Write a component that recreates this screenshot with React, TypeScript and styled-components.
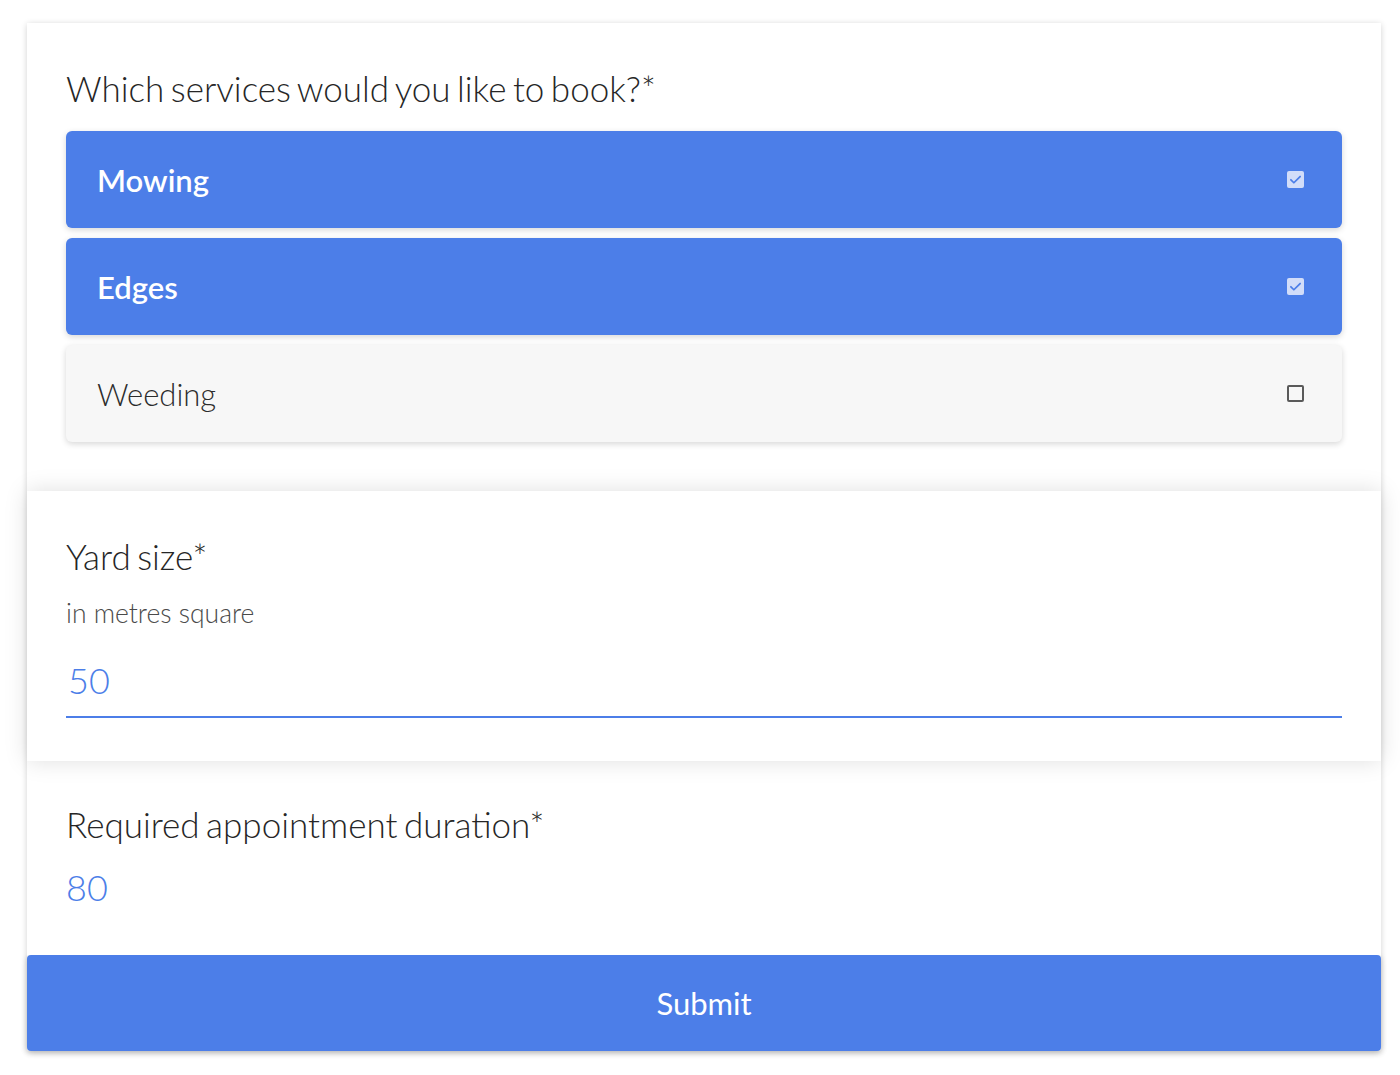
import styled, { createGlobalStyle } from "styled-components";

const GlobalStyle = createGlobalStyle`
  html, body {
    margin: 0;
    padding: 0;
    background: #ffffff;
    font-family: Lato, "Open Sans", sans-serif;
  }
`;

const BLUE = "#4c7ee8";

const Page = styled.div`
  padding: 23px 19px 24px 27px;
`;

const Card = styled.form`
  display: flex;
  flex-direction: column;
  width: 1354px;
  background: #ffffff;
  box-shadow: 0 1px 6px rgba(0, 0, 0, 0.18);
  border-radius: 2px;
`;

const Section = styled.section<{ $raised?: boolean; $top: number; $bottom: number }>`
  position: relative;
  z-index: ${(p) => (p.$raised ? 1 : 0)};
  background: #ffffff;
  padding: ${(p) => p.$top}px 39px ${(p) => p.$bottom}px;
  box-shadow: ${(p) => (p.$raised ? "0 0 22px rgba(0, 0, 0, 0.13)" : "none")};
`;

const Question = styled.h2`
  margin: 0;
  font-size: 35px;
  font-weight: 300;
  line-height: normal;
  word-spacing: -3px;
  color: #262626;
`;

const Hint = styled.p`
  margin: 20px 0 0;
  font-size: 26.5px;
  font-weight: 300;
  line-height: normal;
  color: #4a4a4a;
`;

const Options = styled.div`
  display: flex;
  flex-direction: column;
  gap: 10px;
  margin-top: 22px;
`;

const Option = styled.label<{ $checked: boolean }>`
  display: flex;
  align-items: center;
  justify-content: space-between;
  height: 97px;
  padding: 0 38px 0 31px;
  border-radius: 6px;
  background: ${(p) => (p.$checked ? BLUE : "#f7f7f7")};
  color: ${(p) => (p.$checked ? "#ffffff" : "#2c2c2c")};
  font-size: 31px;
  font-weight: ${(p) => (p.$checked ? 600 : 300)};
  box-shadow: 0 2px 6px rgba(0, 0, 0, 0.16);
  box-sizing: border-box;
`;

const Box = styled.span<{ $checked: boolean }>`
  display: flex;
  align-items: center;
  justify-content: center;
  width: 17px;
  height: 17px;
  box-sizing: border-box;
  border-radius: 2px;
  background: ${(p) => (p.$checked ? "#d2ddf9" : "transparent")};
  border: ${(p) => (p.$checked ? "none" : "2px solid #5a5a5a")};
`;

const ValueInput = styled.div`
  margin-top: 29px;
  padding: 0 0 14px 2px;
  border-bottom: 2px solid ${BLUE};
  font-size: 36px;
  font-weight: 300;
  line-height: normal;
  color: ${BLUE};
`;

const Value = styled.div`
  margin-top: 20px;
  font-size: 36px;
  font-weight: 300;
  line-height: normal;
  color: ${BLUE};
`;

const Submit = styled.button`
  height: 96px;
  border: none;
  border-radius: 4px;
  background: ${BLUE};
  color: #ffffff;
  font-family: Lato, "Open Sans", sans-serif;
  font-size: 31px;
  font-weight: 400;
  box-shadow: 0 2px 6px rgba(0, 0, 0, 0.2);
  cursor: pointer;
`;

const services = [
  { name: "Mowing", checked: true },
  { name: "Edges", checked: true },
  { name: "Weeding", checked: false },
];

const Check = () => (
  <svg width="13" height="13" viewBox="0 0 24 24" fill="none">
    <path d="M3.5 12.5l5.5 5.5L20.5 6.5" stroke={BLUE} strokeWidth="3.2" strokeLinecap="round" strokeLinejoin="round" />
  </svg>
);

const App = () => {
  return (
    <Page>
      <GlobalStyle />
      <Card onSubmit={(e) => e.preventDefault()}>
        <Section $top={44} $bottom={49}>
          <Question>Which services would you like to book?*</Question>
          <Options>
            {services.map((s) => (
              <Option key={s.name} $checked={s.checked}>
                {s.name}
                <Box $checked={s.checked}>{s.checked && <Check />}</Box>
              </Option>
            ))}
          </Options>
        </Section>
        <Section $raised $top={44} $bottom={43}>
          <Question>Yard size*</Question>
          <Hint>in metres square</Hint>
          <ValueInput>50</ValueInput>
        </Section>
        <Section $top={42} $bottom={46}>
          <Question>Required appointment duration*</Question>
          <Value>80</Value>
        </Section>
        <Submit type="submit">Submit</Submit>
      </Card>
    </Page>
  );
};

export default App;
